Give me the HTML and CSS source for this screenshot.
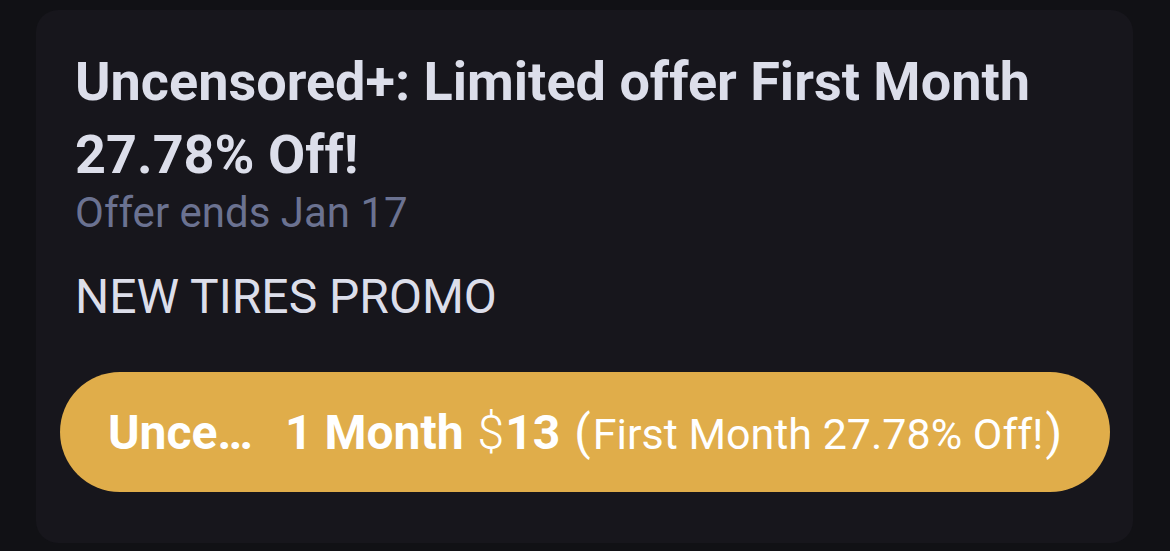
FILE: index.html
```html
<!DOCTYPE html>
<html lang="en">
<head>
<meta charset="utf-8">
<title>Offer</title>
<link rel="stylesheet" href="styles.css">
</head>
<body>
<div class="page">
  <section class="card">
    <div class="info">
      <h1 class="title">Uncensored+: Limited offer First Month 27.78% Off!</h1>
      <p class="ends">Offer ends Jan 17</p>
      <p class="promo">NEW TIRES PROMO</p>
    </div>
    <button class="cta" type="button">
      <span class="name">Unce…</span>
      <span class="plan">1 Month</span>
      <span class="price"><span class="cur">$</span>13</span>
      <span class="note"><span class="paren">(</span>First Month 27.78% Off!<span class="paren">)</span></span>
    </button>
  </section>
</div>
</body>
</html>
```
FILE: styles.css
```css
* { box-sizing: border-box; }
html, body { margin: 0; padding: 0; }
body {
  background: #111115;
  font-family: Roboto, "Noto Sans", sans-serif;
  width: 1170px;
  height: 551px;
  overflow: hidden;
}
.page {
  padding: 10px 37px 8px 36px;
}
.card {
  background: #17161c;
  border-radius: 22px;
  height: 533px;
  padding: 35px 23px 0 24px;
  display: flex;
  flex-direction: column;
}
.info {
  padding: 0 15px;
  display: flex;
  flex-direction: column;
}
.title {
  margin: 0;
  font-size: 54px;
  font-weight: 700;
  line-height: 73px;
  color: #dcdeea;
}
.ends {
  margin: 0;
  font-size: 42px;
  line-height: 44px;
  color: #6b7291;
}
.promo {
  margin: 36px 0 0;
  font-size: 48px;
  line-height: 52px;
  color: #dcdeea;
}
.cta {
  margin-top: 49px;
  height: 120px;
  border: 0;
  border-radius: 60px;
  background: #e0ad4a;
  color: #ffffff;
  font-family: Roboto, sans-serif;
  display: flex;
  align-items: center;
  justify-content: center;
  padding: 0 40px;
  white-space: nowrap;
}
.name {
  font-size: 48px;
  font-weight: 700;
}
.plan {
  margin-left: 32px;
  font-size: 48px;
  font-weight: 700;
}
.price {
  margin-left: 14px;
  font-size: 48px;
  font-weight: 700;
}
.cur {
  font-weight: 300;
  margin-right: 1px;
}
.note {
  margin-left: 14px;
  font-size: 43px;
  font-weight: 400;
}
.paren {
  font-size: 48px;
}
.paren:first-child {
  margin-right: 2px;
}
.paren:last-child {
  margin-left: 2px;
}
```
